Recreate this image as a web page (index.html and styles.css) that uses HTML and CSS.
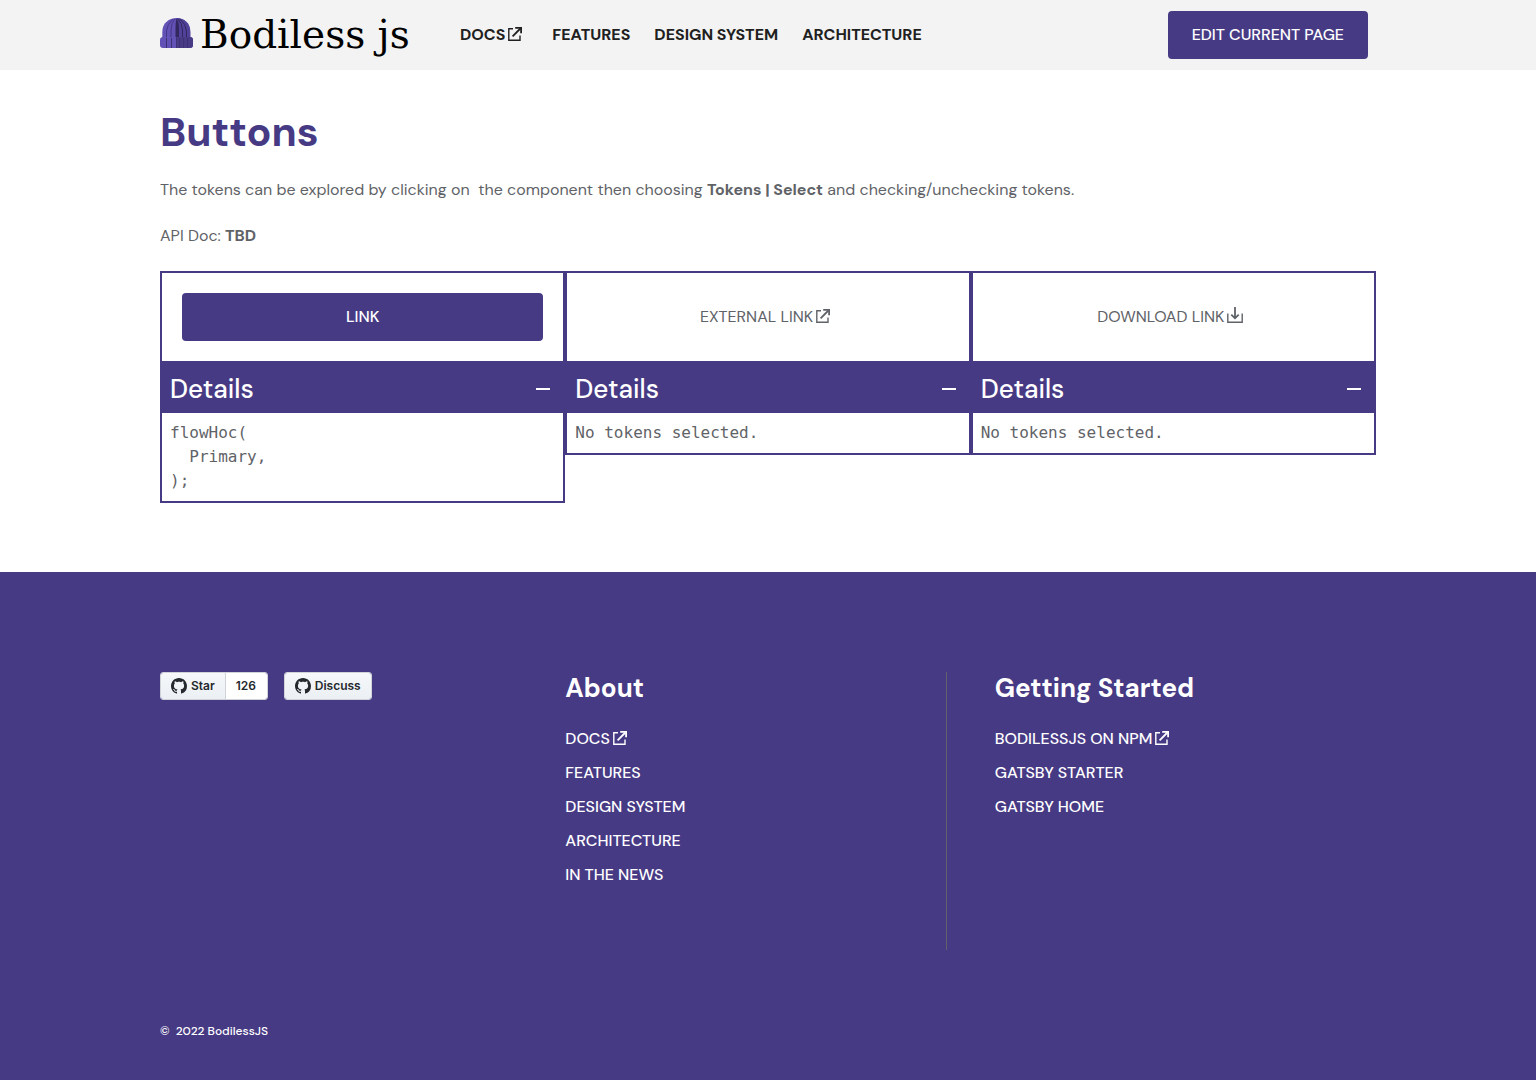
FILE: index.html
```html
<!DOCTYPE html>
<html lang="en">
<head>
<meta charset="utf-8">
<meta name="viewport" content="width=device-width, initial-scale=1">
<title>Buttons - BodilessJS</title>
<link rel="stylesheet" href="styles.css">
</head>
<body>
<svg class="sprite" width="0" height="0" aria-hidden="true">
  <symbol id="external" viewBox="0 0 14 14">
    <path d="M5 1.7H.8V13.2H12V8.5" fill="none" stroke="currentColor" stroke-width="1.4"/>
    <path d="M4.6 9.3 12.4 1.5" fill="none" stroke="currentColor" stroke-width="1.8"/>
    <path d="M7.2 0H14V6.2H12.2V1.8H7.2Z" fill="currentColor"/>
  </symbol>
  <symbol id="download" viewBox="0 0 16 16">
    <path d="M.8 6.5V15.2H15.2V6.5" fill="none" stroke="currentColor" stroke-width="1.4"/>
    <path d="M8 0V11M4.3 7.6 8 11.3 11.7 7.6" fill="none" stroke="currentColor" stroke-width="1.8"/>
  </symbol>
  <symbol id="github" viewBox="0 0 16 16">
    <path fill="currentColor" d="M8 0C3.58 0 0 3.58 0 8c0 3.54 2.29 6.53 5.47 7.59.4.07.55-.17.55-.38 0-.19-.01-.82-.01-1.49-2.01.37-2.53-.49-2.69-.94-.09-.23-.48-.94-.82-1.13-.28-.15-.68-.52-.01-.53.63-.01 1.08.58 1.23.82.72 1.21 1.87.87 2.33.66.07-.52.28-.87.51-1.07-1.78-.2-3.64-.89-3.64-3.95 0-.87.31-1.59.82-2.15-.08-.2-.36-1.02.08-2.12 0 0 .67-.21 2.2.82.64-.18 1.32-.27 2-.27s1.36.09 2 .27c1.53-1.04 2.2-.82 2.2-.82.44 1.1.16 1.92.08 2.12.51.56.82 1.27.82 2.15 0 3.07-1.87 3.75-3.65 3.95.29.25.54.73.54 1.48 0 1.07-.01 1.93-.01 2.2 0 .21.15.46.55.38A8.01 8.01 0 0 0 16 8c0-4.42-3.58-8-8-8z"/>
  </symbol>
</svg>

<header class="site-header">
  <a class="logo" href="#">
    <svg class="logo-hat" viewBox="0 0 33 30" aria-hidden="true">
      <path d="M2.300 22V14C2.300 5 9 0 16.500 0S30.300 5 30.300 14V22Z" fill="#6352b5"/>
      <path d="M16.500 0C24 0 30.300 5 30.300 14V22H16Z" fill="#514198"/>
      <g fill="none" stroke="#45368a" stroke-width="1">
        <path d="M6.500 20V13Q7 6 13 1"/><path d="M11 20V12Q11 5 15 1"/>
        <path d="M26.500 20V13Q26 6 20 1" stroke="#33275f"/><path d="M22.500 20V12Q22 5 18 1" stroke="#33275f"/>
      </g>
      <path d="M15.500 20V10Q15.500 4 16.500 .5Q19 4 19 10V20Z" fill="#33275f"/>
      <rect y="19" width="33" height="11" rx="3" fill="#6352b5"/>
      <path d="M16 19H30Q33 19 33 22V27Q33 30 30 30H16Z" fill="#483a84"/>
      <path d="M6.500 20V30M11.500 20V30M16.500 20V30M19.500 20V30M23.500 20V30M27.500 20V30" stroke="#3d3076" stroke-width="1"/>
    </svg>
    <span class="logo-name">Bodiless js</span>
  </a>
  <nav class="main-nav" aria-label="Main">
    <a href="#">DOCS<svg class="icon"><use href="#external"/></svg></a>
    <a href="#">FEATURES</a>
    <a href="#">DESIGN SYSTEM</a>
    <a href="#">ARCHITECTURE</a>
  </nav>
  <button class="button edit" type="button">EDIT CURRENT PAGE</button>
</header>

<main class="content">
  <h1>Buttons</h1>
  <p>The tokens can be explored by clicking on &nbsp;the component then choosing <strong>Tokens | Select</strong> and checking/unchecking tokens.</p>
  <p>API Doc: <strong>TBD</strong></p>
  <div class="cards">
    <section class="card">
      <div class="preview"><a class="button wide" href="#">LINK</a></div>
      <button class="details" type="button" aria-expanded="true">Details<span class="minus"></span></button>
      <pre class="tokens">flowHoc(
  Primary,
);</pre>
    </section>
    <section class="card">
      <div class="preview"><a href="#">EXTERNAL LINK<svg class="icon"><use href="#external"/></svg></a></div>
      <button class="details" type="button" aria-expanded="true">Details<span class="minus"></span></button>
      <pre class="tokens">No tokens selected.</pre>
    </section>
    <section class="card">
      <div class="preview"><a href="#">DOWNLOAD LINK<svg class="icon icon-download"><use href="#download"/></svg></a></div>
      <button class="details" type="button" aria-expanded="true">Details<span class="minus"></span></button>
      <pre class="tokens">No tokens selected.</pre>
    </section>
  </div>
</main>

<footer class="site-footer">
  <div class="footer-columns">
    <div class="github">
      <div class="gh-group">
        <a class="gh-button" href="#"><svg class="gh-icon"><use href="#github"/></svg>Star</a>
        <a class="gh-count" href="#">126</a>
      </div>
      <div class="gh-group">
        <a class="gh-button" href="#"><svg class="gh-icon"><use href="#github"/></svg>Discuss</a>
      </div>
    </div>
    <div class="about">
      <h2>About</h2>
      <ul>
        <li><a href="#">DOCS<svg class="icon"><use href="#external"/></svg></a></li>
        <li><a href="#">FEATURES</a></li>
        <li><a href="#">DESIGN SYSTEM</a></li>
        <li><a href="#">ARCHITECTURE</a></li>
        <li><a href="#">IN THE NEWS</a></li>
      </ul>
    </div>
    <div class="started">
      <h2>Getting Started</h2>
      <ul>
        <li><a href="#">BODILESSJS ON NPM<svg class="icon"><use href="#external"/></svg></a></li>
        <li><a href="#">GATSBY STARTER</a></li>
        <li><a href="#">GATSBY HOME</a></li>
      </ul>
    </div>
  </div>
  <p class="copyright">© &nbsp;2022 BodilessJS</p>
</footer>
</body>
</html>
```
FILE: styles.css
```css
* {
  box-sizing: border-box;
}

body {
  margin: 0;
  min-height: 100vh;
  display: flex;
  flex-direction: column;
  font: 16px/24px "DM Sans", Inter, sans-serif;
  color: #5f6368;
  background: #fff;
}

h1,
h2,
p,
ul,
pre {
  margin: 0;
  padding: 0;
}

ul {
  list-style: none;
}

a {
  color: inherit;
  text-decoration: none;
}

button {
  border: 0;
  font: inherit;
  cursor: pointer;
}

.sprite {
  position: absolute;
}

.icon {
  width: 14px;
  height: 14px;
  margin: 0 6px 0 3px;
  vertical-align: -1px;
}

.icon-download {
  width: 16px;
  height: 16px;
}

.button {
  height: 48px;
  padding: 0 24px;
  border-radius: 4px;
  background: #473a84;
  color: #fff;
  font-weight: 500;
  line-height: 48px;
  text-align: center;
}

.wide {
  flex: 1;
}

/* Header */
.site-header {
  display: flex;
  align-items: center;
  height: 70px;
  padding: 0 168px 0 160px;
  background: #f3f3f3;
}

.logo {
  display: flex;
  align-items: flex-start;
  gap: 7px;
  width: 252px;
  margin-right: 48px;
  color: #000;
}

.logo-hat {
  flex: none;
  width: 33px;
  height: 30px;
  margin-top: 4px;
}

.logo-name {
  font: 39px/42px "American Typewriter", "DejaVu Serif", serif;
  white-space: nowrap;
}

.main-nav {
  display: flex;
  gap: 24px;
  color: #202020;
  font-weight: 700;
}

.edit {
  margin-left: auto;
}

/* Content */
.content {
  padding: 38px 160px 69px;
}

h1 {
  margin-bottom: 22px;
  color: #473a84;
  font-size: 41px;
  line-height: 48px;
}

.content p {
  margin-bottom: 22px;
}

.cards {
  display: grid;
  grid-template-columns: repeat(3, 1fr);
  align-items: start;
  margin-top: 23px;
}

.card {
  border: 2px solid #473a84;
}

.preview {
  display: flex;
  align-items: center;
  justify-content: center;
  height: 88px;
  padding: 0 20px;
}

.details {
  display: flex;
  align-items: center;
  justify-content: space-between;
  width: 100%;
  height: 52px;
  padding: 4px 13px 0 8px;
  background: #473a84;
  color: #fff;
  font-size: 26px;
  font-weight: 500;
}

.minus {
  width: 14px;
  height: 2px;
  background: #fff;
}

.tokens {
  padding: 8px;
  font: 16px/24px "DejaVu Sans Mono", monospace;
}

/* Footer */
.site-footer {
  flex: 1;
  padding: 100px 160px 37px;
  background: #473a84;
  color: #fff;
  font-weight: 500;
}

.footer-columns {
  display: grid;
  grid-template-columns: repeat(3, 1fr);
  min-height: 278px;
}

.github {
  display: flex;
  align-items: flex-start;
  gap: 16px;
}

.gh-group {
  display: flex;
  height: 28px;
  border: 1px solid #d0d4d9;
  border-radius: 3px;
  overflow: hidden;
  color: #24292e;
  font: 600 12px/26px Inter, sans-serif;
}

.gh-button {
  display: flex;
  align-items: center;
  gap: 4px;
  padding: 0 10px;
  background: linear-gradient(#f6f8fa, #ebf0f4);
}

.gh-icon {
  width: 16px;
  height: 16px;
}

.gh-count {
  min-width: 42px;
  padding: 0 10px;
  border-left: 1px solid #d0d4d9;
  background: #fff;
}

.about {
  margin-right: 24px;
  border-right: 1px solid #5f6368;
}

.started {
  padding-left: 24px;
}

h2 {
  margin-bottom: 23px;
  font-size: 26px;
  line-height: 32px;
}

.site-footer li {
  margin-bottom: 10px;
}

.copyright {
  margin-top: 69px;
  font-size: 12px;
}
```
